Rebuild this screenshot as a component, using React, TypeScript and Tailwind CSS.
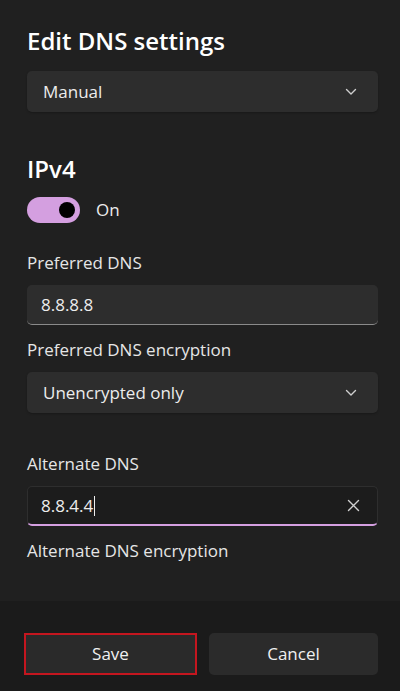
import React from "react";

const font = { fontFamily: '"Open Sans", "Noto Sans", sans-serif' };

function Chevron() {
  return (
    <svg width="12" height="8" viewBox="0 0 12 8" className="text-[#cfcfcf]">
      <polyline points="1.5,1.5 6,6 10.5,1.5" fill="none" stroke="currentColor" strokeWidth="1.4" strokeLinecap="round" strokeLinejoin="round" />
    </svg>
  );
}

function Select({ value, className = "" }: { value: string; className?: string }) {
  return (
    <div className={`flex h-[41px] items-center justify-between rounded-[5px] bg-[#2d2d2d] pl-4 pr-[21px] shadow-[0_1px_2px_rgba(0,0,0,0.25)] ${className}`}>
      <span className="text-[17px] text-[#ececec]">{value}</span>
      <Chevron />
    </div>
  );
}

function Label({ children, className = "" }: { children: React.ReactNode; className?: string }) {
  return <div className={`text-[17px] leading-6 text-[#e6e6e6] ${className}`}>{children}</div>;
}

export default function App() {
  return (
    <div className="flex h-[691px] w-[400px] flex-col bg-[#202020]" style={font}>
      <div className="flex h-[601px] flex-col pl-[27px] pr-[22px] pt-[26px]">
        <h1 className="text-[24px] font-semibold leading-[30px] text-white">Edit DNS settings</h1>
        <Select value="Manual" className="mt-[15px]" />

        <h2 className="mt-[42px] text-[24px] font-semibold leading-[30px] text-white">IPv4</h2>
        <div className="mt-[13px] flex items-center gap-4">
          <div className="flex h-[26px] w-[53px] items-center justify-end rounded-full bg-[#d49fe0] pr-[5px]">
            <div className="h-4 w-4 rounded-full bg-black" />
          </div>
          <span className="text-[17px] text-[#ececec]">On</span>
        </div>

        <Label className="mt-[28px]">Preferred DNS</Label>
        <div className="mt-[10px] flex h-[40px] items-center rounded-[5px] border-b border-[#8a8a8a] bg-[#2d2d2d] pl-[14px]">
          <span className="text-[17px] text-[#ececec]">8.8.8.8</span>
        </div>

        <Label className="mt-[13px]">Preferred DNS encryption</Label>
        <Select value="Unencrypted only" className="mt-[10px]" />

        <Label className="mt-[39px]">Alternate DNS</Label>
        <div className="mt-[10px] flex h-[40px] items-center justify-between rounded-[5px] border border-b-2 border-[#2e2e2e] border-b-[#d49fe0] bg-[#1c1c1c] pl-[13px] pr-[17px]">
          <span className="flex items-center text-[17px] text-[#ececec]">
            8.8.4.4<span className="ml-[1px] h-[20px] w-px bg-[#eeeeee]" />
          </span>
          <svg width="13" height="13" viewBox="0 0 13 13" className="text-[#d0d0d0]">
            <path d="M1.5 1.5 L11.5 11.5 M11.5 1.5 L1.5 11.5" stroke="currentColor" strokeWidth="1.4" strokeLinecap="round" />
          </svg>
        </div>

        <Label className="mt-[13px]">Alternate DNS encryption</Label>
      </div>

      <div className="flex flex-1 gap-3 bg-[#1b1b1b] pl-[24px] pr-[22px] pt-[32px]">
        <button className="flex h-[42px] w-[173px] items-center justify-center border-2 border-[#c4161f] bg-[#2a2a2a] text-[17px] text-[#f0f0f0]">
          Save
        </button>
        <button className="flex h-[42px] flex-1 items-center justify-center rounded-[5px] bg-[#2b2b2b] text-[17px] text-[#f0f0f0]">
          Cancel
        </button>
      </div>
    </div>
  );
}
